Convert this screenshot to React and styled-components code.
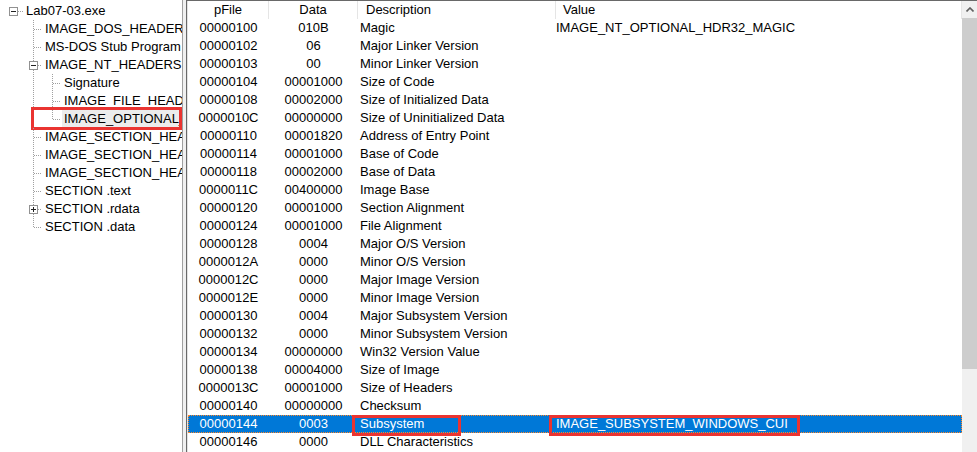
import React from "react";
import styled, { createGlobalStyle } from "styled-components";

const Global = createGlobalStyle`
  html, body { margin: 0; padding: 0; background: #fff; overflow: hidden; }
  body {
    font-family: "Liberation Sans", Arial, sans-serif;
    font-size: 13px;
    color: #000;
  }
`;

const Window = styled.div`
  display: flex;
  width: 977px;
  height: 452px;
  background: #fff;
  overflow: hidden;
`;

/* ---------- Tree ---------- */
const TreePane = styled.div`
  width: 182px;
  flex: none;
  border-right: 1px solid #a0a0a0;
  padding-top: 2px;
  overflow: hidden;
`;

const Splitter = styled.div`
  width: 3px;
  flex: none;
  background: #f0f0f0;
`;

const TreeRow = styled.div`
  position: relative;
  display: flex;
  height: 18px;
  padding-left: 4px;
  white-space: nowrap;
`;

const GuideCell = styled.svg`
  width: 19px;
  height: 18px;
  flex: none;
  display: block;
`;

const TreeLabel = styled.span`
  margin-left: 1px;
  padding: 0 2px;
  line-height: 18px;
  background: ${(p) => (p.$selected ? "#ececec" : "transparent")};
`;

const Annotation = styled.span`
  position: absolute;
  border: 3px solid #ea3431;
  pointer-events: none;
  box-sizing: border-box;
`;

const LINE = "#a0a0a0";

function Guide({ kind, off, box, last, first }) {
  const x = off + 0.5;
  return (
    <GuideCell viewBox="0 0 19 18" shapeRendering="crispEdges">
      {kind === "pipe" && (
        <line x1={x} y1={0} x2={x} y2={18} stroke={LINE} strokeDasharray="1 1" />
      )}
      {kind === "conn" && (
        <>
          {!first && (
            <line
              x1={x}
              y1={0}
              x2={x}
              y2={last ? 9 : 18}
              stroke={LINE}
              strokeDasharray="1 1"
            />
          )}
          <line x1={off + 1} y1={9.5} x2={19} y2={9.5} stroke={LINE} strokeDasharray="1 1" />
          {box && (
            <>
              <rect
                x={off - 3.5}
                y={5.5}
                width={8}
                height={8}
                fill="#fff"
                stroke="#919191"
              />
              <line x1={off - 2} y1={9.5} x2={off + 3} y2={9.5} stroke="#222" />
              {box === "plus" && (
                <line x1={x} y1={7} x2={x} y2={12} stroke="#222" />
              )}
            </>
          )}
        </>
      )}
    </GuideCell>
  );
}

const treeItems = [
  { label: "Lab07-03.exe", guides: [], level: 0, box: "minus", first: true, last: true },
  { label: "IMAGE_DOS_HEADER", guides: ["blank"], level: 1 },
  { label: "MS-DOS Stub Program", guides: ["blank"], level: 1 },
  { label: "IMAGE_NT_HEADERS", guides: ["blank"], level: 1, box: "minus" },
  { label: "Signature", guides: ["blank", "pipe"], level: 2 },
  { label: "IMAGE_FILE_HEADER", guides: ["blank", "pipe"], level: 2 },
  {
    label: "IMAGE_OPTIONAL_HEADER",
    guides: ["blank", "pipe"],
    level: 2,
    last: true,
    selected: true,
    marked: true,
  },
  { label: "IMAGE_SECTION_HEADER .text", guides: ["blank"], level: 1 },
  { label: "IMAGE_SECTION_HEADER .rdata", guides: ["blank"], level: 1 },
  { label: "IMAGE_SECTION_HEADER .data", guides: ["blank"], level: 1 },
  { label: "SECTION .text", guides: ["blank"], level: 1 },
  { label: "SECTION .rdata", guides: ["blank"], level: 1, box: "plus" },
  { label: "SECTION .data", guides: ["blank"], level: 1, last: true },
];

const offFor = (lvl) => (lvl === 0 ? 9 : 10);

/* ---------- List ---------- */
const ListFrame = styled.div`
  flex: 1;
  min-width: 0;
  display: flex;
  border-top: 1px solid #696969;
  border-left: 1px solid #696969;
`;

const ListInner = styled.div`
  flex: 1;
  min-width: 0;
  display: flex;
  flex-direction: column;
  border-left: 1px solid #e3e3e3;
`;

const COLS = "81px 89px 198px 1fr";

const HeaderRow = styled.div`
  display: grid;
  grid-template-columns: ${COLS};
  height: 18px;
  flex: none;
`;

const HeaderCell = styled.div`
  border-right: 1px solid #e5e5e5;
  line-height: 18px;
  padding-left: ${(p) => p.$pad || 0}px;
  text-align: ${(p) => p.$align || "left"};
  white-space: nowrap;
  overflow: hidden;
`;

const Row = styled.div`
  display: grid;
  grid-template-columns: ${COLS};
  height: 18px;
  line-height: 18px;
  flex: none;
  white-space: nowrap;
  background: ${(p) => (p.$selected ? "#0078d7" : "transparent")};
  color: ${(p) => (p.$selected ? "#fff" : "#000")};
  outline: ${(p) => (p.$selected ? "1px dotted #ff8728" : "none")};
  outline-offset: -1px;
`;

const Cell = styled.div`
  position: relative;
  padding-left: ${(p) => p.$pad || 0}px;
  text-align: ${(p) => p.$align || "left"};
`;

const Scrollbar = styled.div`
  width: 15px;
  flex: none;
  background: #f0f0f0;
  display: flex;
  flex-direction: column;
`;

const ScrollButton = styled.div`
  height: 17px;
  display: flex;
  align-items: center;
  justify-content: center;
`;

const Thumb = styled.div`
  height: 351px;
  background: #cdcdcd;
`;

const rows = [
  ["00000100", "010B", "Magic", "IMAGE_NT_OPTIONAL_HDR32_MAGIC"],
  ["00000102", "06", "Major Linker Version", ""],
  ["00000103", "00", "Minor Linker Version", ""],
  ["00000104", "00001000", "Size of Code", ""],
  ["00000108", "00002000", "Size of Initialized Data", ""],
  ["0000010C", "00000000", "Size of Uninitialized Data", ""],
  ["00000110", "00001820", "Address of Entry Point", ""],
  ["00000114", "00001000", "Base of Code", ""],
  ["00000118", "00002000", "Base of Data", ""],
  ["0000011C", "00400000", "Image Base", ""],
  ["00000120", "00001000", "Section Alignment", ""],
  ["00000124", "00001000", "File Alignment", ""],
  ["00000128", "0004", "Major O/S Version", ""],
  ["0000012A", "0000", "Minor O/S Version", ""],
  ["0000012C", "0000", "Major Image Version", ""],
  ["0000012E", "0000", "Minor Image Version", ""],
  ["00000130", "0004", "Major Subsystem Version", ""],
  ["00000132", "0000", "Minor Subsystem Version", ""],
  ["00000134", "00000000", "Win32 Version Value", ""],
  ["00000138", "00004000", "Size of Image", ""],
  ["0000013C", "00001000", "Size of Headers", ""],
  ["00000140", "00000000", "Checksum", ""],
  ["00000144", "0003", "Subsystem", "IMAGE_SUBSYSTEM_WINDOWS_CUI", true],
  ["00000146", "0000", "DLL Characteristics", ""],
];

export default function App() {
  return (
    <>
      <Global />
      <Window>
        <TreePane>
          {treeItems.map((it) => (
            <TreeRow key={it.label}>
              {it.guides.map((g, i) => (
                <Guide key={i} kind={g} off={offFor(i)} />
              ))}
              <Guide
                kind="conn"
                off={offFor(it.level)}
                box={it.box}
                last={it.last}
                first={it.first}
              />
              <TreeLabel $selected={it.selected}>{it.label}</TreeLabel>
              {it.marked && (
                <Annotation style={{ left: 31, right: 0, top: -3, height: 23 }} />
              )}
            </TreeRow>
          ))}
        </TreePane>
        <Splitter />
        <ListFrame>
          <ListInner>
            <HeaderRow>
              <HeaderCell $align="center">pFile</HeaderCell>
              <HeaderCell $align="center">Data</HeaderCell>
              <HeaderCell $pad={8}>Description</HeaderCell>
              <HeaderCell $pad={7}>Value</HeaderCell>
            </HeaderRow>
            {rows.map(([pf, data, desc, val, sel]) => (
              <Row key={pf} $selected={sel}>
                <Cell $align="center">{pf}</Cell>
                <Cell $align="center">{data}</Cell>
                <Cell $pad={2}>
                  {desc}
                  {sel && <Annotation style={{ left: -6, top: 0, width: 109, height: 21 }} />}
                </Cell>
                <Cell>
                  {val}
                  {sel && <Annotation style={{ left: -7, top: 0, width: 251, height: 21 }} />}
                </Cell>
              </Row>
            ))}
          </ListInner>
          <Scrollbar>
            <ScrollButton>
              <svg width="8" height="5" viewBox="0 0 8 5">
                <path d="M0.5 4.5 L4 1 L7.5 4.5" fill="none" stroke="#606060" strokeWidth="1.6" />
              </svg>
            </ScrollButton>
            <Thumb />
          </Scrollbar>
        </ListFrame>
      </Window>
    </>
  );
}
